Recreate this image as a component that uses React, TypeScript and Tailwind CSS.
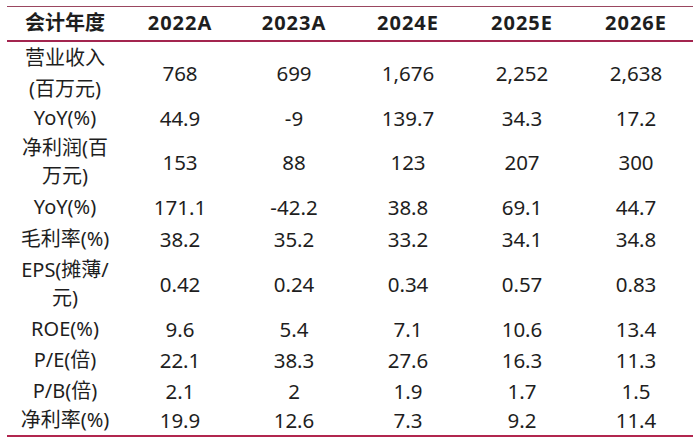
const years = ['2022A', '2023A', '2024E', '2025E', '2026E']

type Row = {
	label: string
	values: string[]
	h: string
	lh?: string
}

const rows: Row[] = [
	{ label: '营业收入(百万元)', values: ['768', '699', '1,676', '2,252', '2,638'], h: 'h-[59px]', lh: 'leading-[31px]' },
	{ label: 'YoY(%)', values: ['44.9', '-9', '139.7', '34.3', '17.2'], h: 'h-[29px]' },
	{ label: '净利润(百万元)', values: ['153', '88', '123', '207', '300'], h: 'h-[59px]' },
	{ label: 'YoY(%)', values: ['171.1', '-42.2', '38.8', '69.1', '44.7'], h: 'h-[31px]' },
	{ label: '毛利率(%)', values: ['38.2', '35.2', '33.2', '34.1', '34.8'], h: 'h-[32px]' },
	{ label: 'EPS(摊薄/元)', values: ['0.42', '0.24', '0.34', '0.57', '0.83'], h: 'h-[59px]' },
	{ label: 'ROE(%)', values: ['9.6', '5.4', '7.1', '10.6', '13.4'], h: 'h-[31px]' },
	{ label: 'P/E(倍)', values: ['22.1', '38.3', '27.6', '16.3', '11.3'], h: 'h-[31px]' },
	{ label: 'P/B(倍)', values: ['2.1', '2', '1.9', '1.7', '1.5'], h: 'h-[30px]' },
	{ label: '净利率(%)', values: ['19.9', '12.6', '7.3', '9.2', '11.4'], h: 'h-[30px]' },
]

export default function App() {
	return (
		<div className="w-[700px] h-[442px] bg-white pt-[6px] pl-[7px] text-[#1e1e1e] font-['Noto_Sans','Noto_Sans_CJK_SC',sans-serif]">
			<table className="table-fixed border-collapse w-[686px] text-[20px]">
				<colgroup>
					<col className="w-[116px]" />
					{years.map(y => <col key={y} className="w-[114px]" />)}
				</colgroup>
				<thead>
					<tr className="h-[34px] border-t border-t-[#9a4660] border-b-2 border-b-[#a3254f]">
						<th className="px-[6px] font-bold text-center leading-[28px]">会计年度</th>
						{years.map(y => (
							<th key={y} className="font-bold text-center leading-[28px] tracking-[1px]">{y}</th>
						))}
					</tr>
				</thead>
				<tbody>
					{rows.map((r, i) => (
						<tr key={i} className={`${r.h} ${i === rows.length - 1 ? 'border-b-2 border-b-[#b1264f]' : ''}`}>
							<td className={`px-[6px] text-center align-middle ${r.lh || 'leading-[28px]'}`}>{r.label}</td>
							{r.values.map((v, j) => (
								<td key={j} className="text-center align-middle leading-[28px] text-[20.5px]">{v}</td>
							))}
						</tr>
					))}
				</tbody>
			</table>
		</div>
	)
}
